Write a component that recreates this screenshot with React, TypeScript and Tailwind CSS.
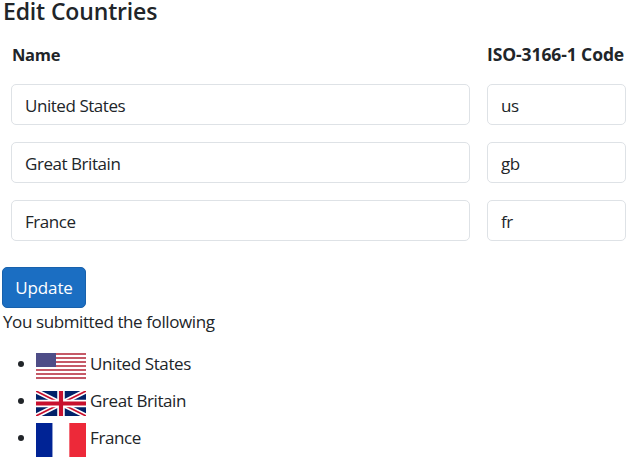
const font = "font-['Open_Sans','Noto_Sans',sans-serif]";

function UsFlag() {
  const stripes = [0, 2, 4, 6, 8, 10, 12];
  const cols = Array.from({ length: 10 }, (_, i) => i);
  const lines = Array.from({ length: 7 }, (_, i) => i);
  return (
    <svg className="inline-block align-middle -ml-px mt-[2px]" width="50" height="26" viewBox="0 0 50 26" preserveAspectRatio="none">
      <rect width="50" height="26" fill="#fff" />
      {stripes.map((y) => (
        <rect key={y} y={y * 2} width="50" height="2" fill="#b22234" opacity="0.75" />
      ))}
      <rect width="20" height="14" fill="#3a3a78" />
      {lines.map((l) =>
        cols.map((c) => (
          <rect key={`${l}-${c}`} x={c * 2 + 0.5} y={l * 2 + 0.5} width="1" height="1" fill="#8a89b4" />
        )),
      )}
    </svg>
  );
}

function GbFlag() {
  return (
    <svg className="inline-block align-middle -ml-px mt-[2px]" width="50" height="25" viewBox="0 0 60 30">
      <rect width="60" height="30" fill="#012169" />
      <path d="M0 0L60 30M60 0L0 30" stroke="#fff" strokeWidth="6" />
      <path d="M0 0L60 30M60 0L0 30" stroke="#c8102e" strokeWidth="2" />
      <path d="M30 0V30M0 15H60" stroke="#fff" strokeWidth="9" />
      <path d="M30 0V30M0 15H60" stroke="#c8102e" strokeWidth="5" />
    </svg>
  );
}

function FrFlag() {
  return (
    <svg className="inline-block align-middle -ml-px mt-[2px]" width="50" height="34" viewBox="0 0 3 2" preserveAspectRatio="none">
      <rect width="1" height="2" fill="#002395" />
      <rect x="1" width="1" height="2" fill="#fff" />
      <rect x="2" width="1" height="2" fill="#ed2939" />
    </svg>
  );
}

const rows = [
  { name: 'United States', code: 'us' },
  { name: 'Great Britain', code: 'gb' },
  { name: 'France', code: 'fr' },
];

const inputClass =
  'block h-[41px] w-full rounded-[5px] border border-[#dee2e6] bg-white px-[13px] pt-[2px] text-[17px] tracking-[-0.45px] text-[#212529] outline-none';

export default function App() {
  return (
    <div className={`${font} bg-white text-[#212529] w-[630px] pl-[3px]`}>
      <h1 className="text-[23px] leading-[22px] font-[550] tracking-[-0.15px]">Edit Countries</h1>

      <div className="mt-[3px] ml-[8px] grid grid-cols-[459px_139px] gap-x-[17px]">
        <div className="py-[17px] pl-px text-[16.5px] leading-[25px] font-bold tracking-[-0.3px]">Name</div>
        <div className="py-[17px] text-[17.5px] leading-[25px] font-bold tracking-[-0.1px] whitespace-nowrap">ISO-3166-1 Code</div>
        {rows.map((r) => (
          <div key={r.code} className="contents">
            <div className="mb-[17px]">
              <input className={inputClass} defaultValue={r.name} />
            </div>
            <div className="mb-[17px]">
              <input className={inputClass} defaultValue={r.code} />
            </div>
          </div>
        ))}
      </div>

      <button className="mt-[9px] -ml-px block h-[41px] w-[84px] rounded-[5px] bg-[#1b6ec2] border border-[#1861ac] text-[17px] tracking-[-0.1px] text-white">
        Update
      </button>
      <p className="text-[17px] tracking-[-0.4px] leading-[28px] whitespace-nowrap">You submitted the following</p>

      <ul className="mt-[15px] ml-[34px] list-disc text-[17px] tracking-[-0.4px]">
        <li className="h-[37px] leading-[26px]">
          <UsFlag /> United States
        </li>
        <li className="h-[33px] leading-[26px]">
          <GbFlag /> Great Britain
        </li>
        <li className="leading-[34px]">
          <FrFlag /> France
        </li>
      </ul>
    </div>
  );
}
